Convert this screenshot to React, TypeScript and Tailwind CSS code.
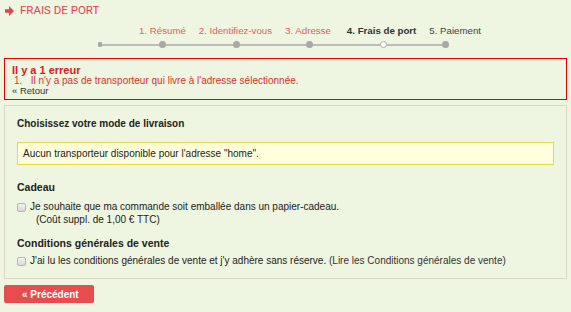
const steps = [
  { label: "1. Résumé", state: "done" },
  { label: "2. Identifiez-vous", state: "done" },
  { label: "3. Adresse", state: "done" },
  { label: "4. Frais de port", state: "current" },
  { label: "5. Paiement", state: "todo" },
];

const dots = [
  { x: 64, kind: "filled" },
  { x: 138, kind: "filled" },
  { x: 211, kind: "filled" },
  { x: 285, kind: "hollow" },
  { x: 347, kind: "filled" },
];

const Checkbox = () => (
  <span className="mt-[2px] inline-block h-[9px] w-[9px] shrink-0 rounded-[2px] border border-[#b5b5b5] bg-gradient-to-b from-[#f4f4f4] to-[#d8d8d8]" />
);

export default function App() {
  return (
    <div className="h-[312px] w-full overflow-hidden bg-[#eef5e1] font-['Liberation_Sans',Arial,sans-serif] text-[10px] text-[#222]">
      <div className="flex items-center gap-[6px] pl-[5px] pt-[3px]">
        <svg width="9" height="10" viewBox="0 0 10 11">
          <path d="M0 3.5h4.5V0L10 5.5 4.5 11V7.5H0z" fill="#e8434a" />
        </svg>
        <h1 className="font-['Roboto',sans-serif] text-[11.5px] uppercase leading-[15px] text-[#e8434a]">
          Frais de port
        </h1>
      </div>

      <div className="ml-[98px] mt-[6px]">
        <div className="ml-[41px] flex gap-[13px] whitespace-nowrap text-[9.7px] leading-[13px]">
          {steps.map((s, i) => (
            <span
              key={s.label}
              className={
                (i === 3 ? "ml-[3px] " : "") +
                (s.state === "done"
                  ? "text-[#e8605a]"
                  : s.state === "current"
                  ? "font-bold text-[#333]"
                  : "text-[#444]")
              }
            >
              {s.label}
            </span>
          ))}
        </div>
        <div className="relative mt-[4px] h-[7px] w-[352px]">
          <div className="absolute left-0 top-[3px] h-[2px] w-[348px] bg-[#bcbcbc]" />
          <div className="absolute left-0 top-[1px] h-[5px] w-[4px] rounded-[1px] bg-[#a9a9a9]" />
          {dots.map((d) => (
            <span
              key={d.x}
              style={{ left: d.x - 3.5 }}
              className={
                d.kind === "hollow"
                  ? "absolute top-0 h-[7px] w-[7px] rounded-full border-[1.5px] border-[#a9a9a9] bg-white"
                  : "absolute top-0 h-[7px] w-[7px] rounded-full bg-[#a9a9a9]"
              }
            />
          ))}
        </div>
      </div>

      <div className="mx-[4px] mt-[10px] border border-[#e00000] px-[7px] pb-[3px] pt-[5px]">
        <p className="text-[11px] font-bold leading-[12px] text-[#d42020]">Il y a 1 erreur</p>
        <ol className="leading-[10px] text-[#e0302a]">
          <li className="pl-[2px]">1.&nbsp;&nbsp; Il n'y a pas de transporteur qui livre à l'adresse sélectionnée.</li>
        </ol>
        <a className="block text-[9.5px] leading-[10px] text-[#333]">« Retour</a>
      </div>

      <div className="mx-[4px] mt-[5px] border border-[#ddd5c5] px-[12px] pb-[11px] pt-[11px]">
        <h3 className="text-[10px] font-bold leading-[14px] text-[#222]">Choisissez votre mode de livraison</h3>
        <div className="mt-[11px] border border-[#e6d84a] bg-[#ffffdd] px-[5px] py-[4px] leading-[13px]">
          Aucun transporteur disponible pour l'adresse "home".
        </div>

        <h3 className="mt-[15px] text-[10.5px] font-bold leading-[14px] text-[#222]">Cadeau</h3>
        <div className="mt-[7px] flex items-start gap-[4px] leading-[12px]">
          <Checkbox />
          <div>
            <p>Je souhaite que ma commande soit emballée dans un papier-cadeau.</p>
            <p className="ml-[6px] mt-[1px]">(Coût suppl. de 1,00 € TTC)</p>
          </div>
        </div>

        <h3 className="mt-[10px] text-[10.5px] font-bold leading-[14px] text-[#222]">Conditions générales de vente</h3>
        <div className="mt-[5px] flex items-start gap-[4px] leading-[12px]">
          <Checkbox />
          <p>
            J'ai lu les conditions générales de vente et j'y adhère sans réserve.{" "}
            <a className="text-[#333]">(Lire les Conditions générales de vente)</a>
          </p>
        </div>
      </div>

      <button className="ml-[4px] mt-[6px] h-[18px] w-[90px] rounded-[2px] bg-[#e84c4c] pl-[18px] text-left text-[10px] font-bold text-white">
        « Précédent
      </button>
    </div>
  );
}
